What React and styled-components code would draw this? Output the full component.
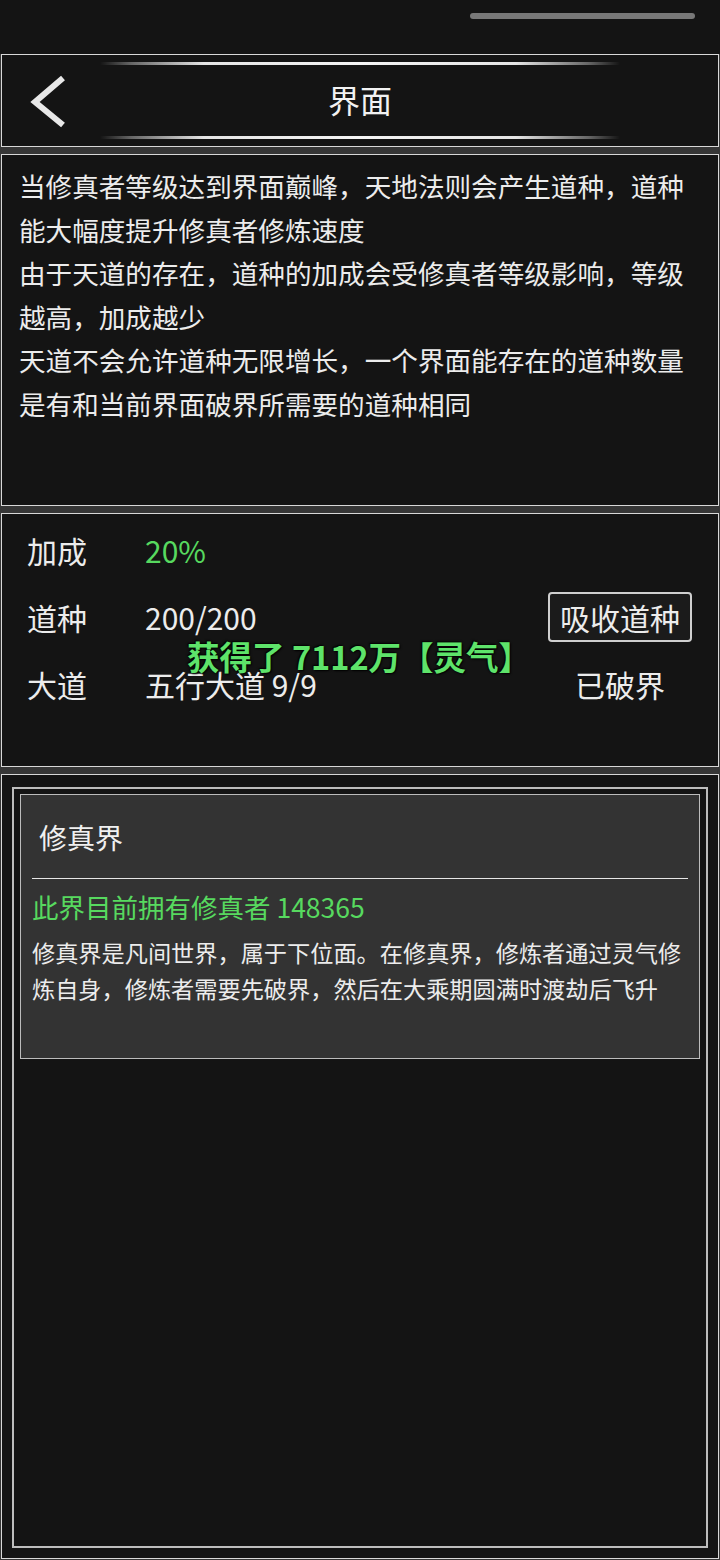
import React from "react";
import styled, { createGlobalStyle } from "styled-components";

const GlobalStyle = createGlobalStyle`
  html, body {
    margin: 0;
    padding: 0;
    background: #141414;
  }
  body {
    font-family: "Noto Sans CJK SC", "Noto Sans", sans-serif;
    color: #ececec;
  }
`

const Screen = styled.div`
  width: 720px;
  height: 1560px;
  display: flex;
  flex-direction: column;
  background: #141414;
  overflow: hidden;
`

const StatusBar = styled.div`
  height: 54px;
  flex: none;
  display: flex;
  justify-content: flex-end;
  padding: 13px 25px 0 0;
  box-sizing: border-box;
`

const HomeBar = styled.div`
  width: 225px;
  height: 6px;
  border-radius: 3px;
  background: #787878;
`

const Stack = styled.div`
  flex: 1;
  display: flex;
  flex-direction: column;
  gap: 7px;
  background: #363636;
  padding-bottom: 1px;
`

const Panel = styled.div`
  position: relative;
  height: ${p => p.h}px;
  flex: ${p => (p.grow ? 1 : "none")};
  margin: 0 1px;
  border: 1px solid #d8d8d8;
  background: #141414;
  box-sizing: border-box;
  min-width: 0;
`

const Header = styled(Panel)`
  display: flex;
  align-items: center;
  justify-content: center;
  flex-direction: column;
`

const Glow = styled.div`
  width: 520px;
  height: 3px;
  background: linear-gradient(90deg, rgba(255,255,255,0) 0%, rgba(255,255,255,0.35) 6%, rgba(240,240,240,0.95) 20%, #f4f4f4 50%, rgba(240,240,240,0.95) 80%, rgba(255,255,255,0.35) 94%, rgba(255,255,255,0) 100%);
`

const TitleRow = styled.div`
  width: 100%;
  height: 71px;
  display: flex;
  align-items: center;
  justify-content: center;
`

const BackBtn = styled.div`
  position: absolute;
  left: 22px;
  top: 19px;
  width: 44px;
  height: 54px;
`

const Title = styled.div`
  font-size: 32px;
  color: #f2f2f2;
  line-height: 1;
  margin-top: -4px;
`

const Intro = styled(Panel)`
  padding: 9px 0 0 17px;
`

const Para = styled.p`
  margin: 0;
  width: 680px;
  font-size: 26.6px;
  line-height: 43.5px;
  color: #ececec;
`

const Stats = styled(Panel)`
  padding: 2px 0 0 0;
`

const StatRow = styled.div`
  height: 67px;
  display: grid;
  grid-template-columns: 118px 1fr 144px;
  align-items: center;
  padding: 0 26px 0 25px;
  font-size: 30px;
  color: #ececec;
`

const Value = styled.span`
  color: ${p => (p.green ? "#57d95f" : "#ececec")};
`

const Side = styled.div`
  text-align: center;
`

const AbsorbBtn = styled.div`
  height: 50px;
  border: 2px solid #cfcfcf;
  border-radius: 4px;
  background: #1b1b1b;
  display: flex;
  align-items: center;
  justify-content: center;
  box-sizing: border-box;
  font-size: 30px;
`

const Toast = styled.div`
  position: absolute;
  left: 185px;
  top: 118px;
  font-size: 32.5px;
  font-weight: 700;
  color: #5ee36a;
  white-space: nowrap;
  text-shadow: 1px 1px 2px #000, -1px -1px 2px #000;
`

const World = styled(Panel)`
  padding: 12px 10px 10px 10px;
  display: flex;
`

const Frame = styled.div`
  flex: 1;
  min-width: 0;
  border: 2px solid #bdbdbd;
  padding: 5px 6px;
`

const Card = styled.div`
  height: 265px;
  border: 1px solid #bcbcbc;
  background: #333333;
  padding: 0 11px;
  box-sizing: border-box;
`

const CardTitle = styled.div`
  height: 84px;
  display: flex;
  align-items: center;
  padding-left: 7px;
  font-size: 28px;
  color: #f0f0f0;
  border-bottom: 1px solid #e6e6e6;
  box-sizing: border-box;
`

const Population = styled.div`
  margin-top: 10px;
  font-size: 26.5px;
  line-height: 36px;
  color: #57d95f;
`

const Desc = styled.div`
  margin-top: 9px;
  font-size: 23.2px;
  line-height: 36px;
  color: #ececec;
`

export default function App() {
  return (
    <Screen>
      <GlobalStyle />
      <StatusBar>
        <HomeBar />
      </StatusBar>
      <Stack>
        <Header h={93}>
          <Glow />
          <TitleRow>
            <Title>界面</Title>
          </TitleRow>
          <Glow />
          <BackBtn>
            <svg width="44" height="54" viewBox="0 0 44 54">
              <polyline points="39,4 11,28 39,51" fill="none" stroke="#e8e8e8" strokeWidth="6" strokeLinejoin="miter" />
            </svg>
          </BackBtn>
        </Header>

        <Intro h={352}>
          <Para>当修真者等级达到界面巅峰，天地法则会产生道种，道种能大幅度提升修真者修炼速度</Para>
          <Para>由于天道的存在，道种的加成会受修真者等级影响，等级越高，加成越少</Para>
          <Para>天道不会允许道种无限增长，一个界面能存在的道种数量是有和当前界面破界所需要的道种相同</Para>
        </Intro>

        <Stats h={254}>
          <StatRow>
            <span>加成</span>
            <Value green>20%</Value>
            <Side />
          </StatRow>
          <StatRow>
            <span>道种</span>
            <Value>200/200</Value>
            <AbsorbBtn>吸收道种</AbsorbBtn>
          </StatRow>
          <StatRow>
            <span>大道</span>
            <Value>五行大道 9/9</Value>
            <Side>已破界</Side>
          </StatRow>
          <Toast>获得了 7112万【灵气】</Toast>
        </Stats>

        <World grow>
          <Frame>
            <Card>
              <CardTitle>修真界</CardTitle>
              <Population>此界目前拥有修真者 148365</Population>
              <Desc>修真界是凡间世界，属于下位面。在修真界，修炼者通过灵气修炼自身，修炼者需要先破界，然后在大乘期圆满时渡劫后飞升</Desc>
            </Card>
          </Frame>
        </World>
      </Stack>
    </Screen>
  )
}
